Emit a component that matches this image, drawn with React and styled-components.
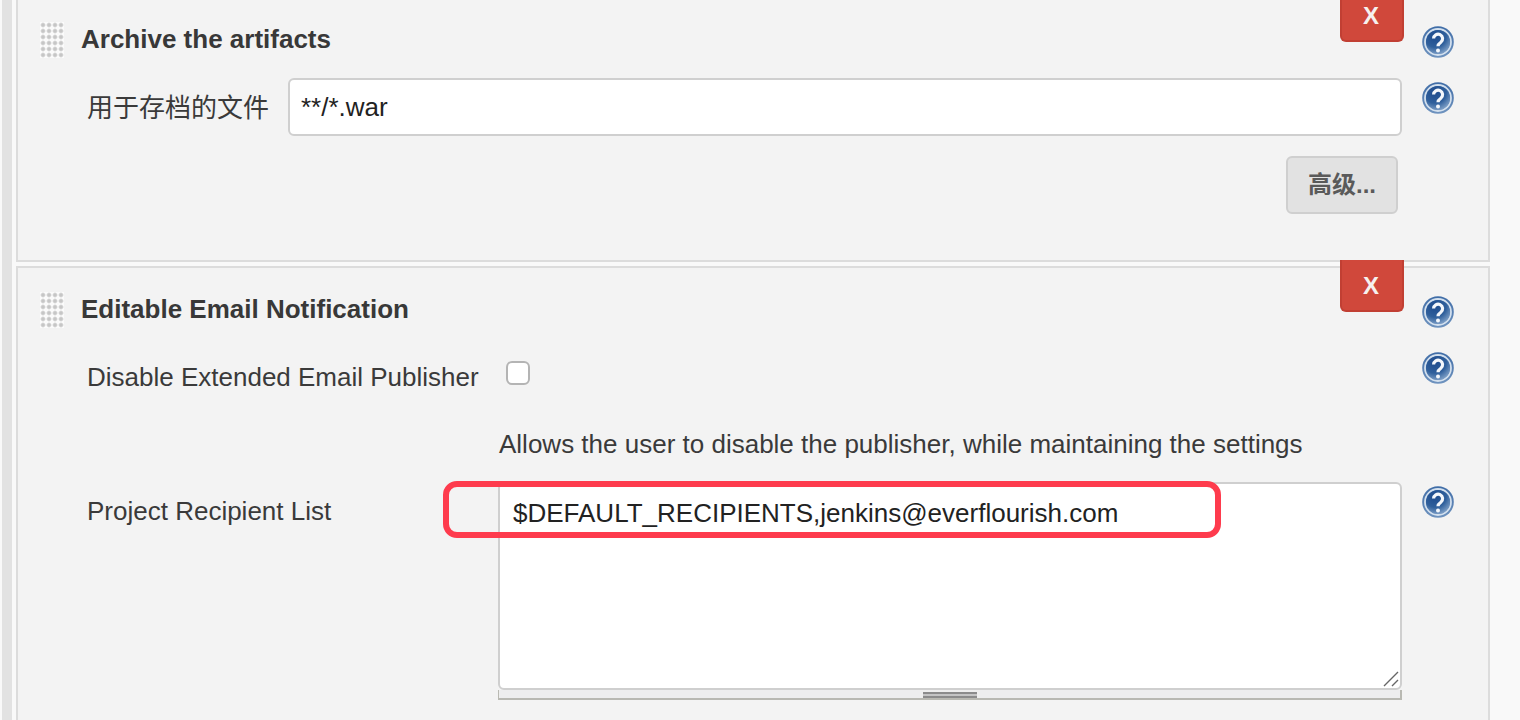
import React from "react"
import styled, { createGlobalStyle } from "styled-components"

const GlobalStyle = createGlobalStyle`
  html, body {
    margin: 0;
    height: 720px;
    overflow: hidden;
    background: #f9f9f9;
  }
  body {
    font-family: "Liberation Sans", "Noto Sans CJK SC", sans-serif;
    color: #333;
  }
`

const Page = styled.div`
  display: flex;
  height: 720px;
  overflow: hidden;
`

const Rail = styled.div`
  flex: 0 0 10px;
  margin: 0 4px 0 2px;
  background: #e2e2e2;
`

const Main = styled.div`
  flex: 0 0 1474px;
  display: flex;
  flex-direction: column;
  gap: 4px;
`

const Section = styled.section`
  position: relative;
  box-sizing: border-box;
  flex: 0 0 auto;
  background: #f3f3f3;
  border: 2px solid #dcdcdc;
  border-top-width: ${(p) => (p.$cut ? 0 : "2px")};
  padding: ${(p) => (p.$cut ? "22px 34px 46px 22px" : "24px 34px 40px 22px")};
`

const DeleteButton = styled.div`
  position: absolute;
  right: 84px;
  top: ${(p) => (p.$cut ? "-10px" : "-8px")};
  box-sizing: border-box;
  width: 64px;
  height: 52px;
  padding: 1px 2px 0 0;
  display: flex;
  align-items: center;
  justify-content: center;
  background: #d0483b;
  border: 2px solid #c13f33;
  border-top: 0;
  border-radius: 0 0 6px 6px;
  color: #f6f1ef;
  font-size: 24px;
  font-weight: 700;
`

const Header = styled.div`
  display: flex;
  align-items: flex-start;
  height: 36px;
`

const Grip = styled.div`
  flex: 0 0 24px;
  height: 36px;
  margin-right: 17px;
  background-color: #fbfbfb;
  background-image: radial-gradient(circle, #c6c6c6 1.3px, #fbfbfb 2.9px);
  background-size: 6px 6px;
`

const Title = styled.h3`
  flex: 1;
  margin: 0;
  font-size: 26px;
  line-height: 34px;
  font-weight: 700;
  color: #383838;
`

const Row = styled.div`
  position: relative;
  display: flex;
  align-items: flex-start;
  margin-top: ${(p) => p.$top || 20}px;
  min-height: ${(p) => p.$min || 0}px;
`

const Label = styled.label`
  box-sizing: border-box;
  flex: 0 0 ${(p) => p.$width}px;
  padding-left: 47px;
  padding-top: ${(p) => p.$pad || 0}px;
  font-size: 26px;
  line-height: 34px;
  color: #3a3a3a;
`

const Control = styled.div`
  flex: 1;
  min-width: 0;
`

const TextInput = styled.input`
  box-sizing: border-box;
  display: block;
  width: 100%;
  height: 58px;
  padding: 1px 11px 0;
  background: #fff;
  border: 2px solid #cfcfcf;
  border-radius: 6px;
  outline: 0;
  font: 26px "Liberation Sans", sans-serif;
  color: #222;
`

const Check = styled.input`
  appearance: none;
  display: block;
  box-sizing: border-box;
  width: 24px;
  height: 24px;
  margin: 13px 0 0 7px;
  background: #fff;
  border: 2px solid #b4b4b4;
  border-radius: 6px;
`

const Actions = styled.div`
  display: flex;
  justify-content: flex-end;
  margin: 20px 56px 0 0;
`

const Button = styled.button`
  box-sizing: border-box;
  width: 112px;
  height: 58px;
  padding: 0 0 6px;
  background: #e2e2e2;
  border: 2px solid #cfcfcf;
  border-radius: 6px;
  font: 700 24px "Liberation Sans", "Noto Sans CJK SC", sans-serif;
  color: #5a5a5a;
`

const Description = styled.div`
  margin: 21px 0 0 459px;
  font-size: 26px;
  line-height: 30px;
  color: #3a3a3a;
`

const AreaWrap = styled.div`
  position: relative;
  flex: 1;
  min-width: 0;
`

const Area = styled.textarea`
  box-sizing: border-box;
  display: block;
  width: 100%;
  height: 208px;
  padding: 14px 13px;
  background: #fff;
  border: 2px solid #cfcfcf;
  border-radius: 6px;
  outline: 0;
  resize: none;
  font: 26px/30px "Liberation Sans", sans-serif;
  color: #222;
`

const ResizeSvg = styled.svg`
  position: absolute;
  right: 3px;
  bottom: 13px;
  width: 16px;
  height: 16px;
`

const Grippie = styled.div`
  box-sizing: border-box;
  height: 10px;
  display: flex;
  justify-content: center;
  background: #eeeeee;
  border: 2px solid #b9b9b2;
  border-top: 0;
  border-left-width: 1px;

  &::before {
    content: "";
    width: 54px;
    height: 6px;
    margin-top: 2px;
    background: linear-gradient(#8b8b8b 0 2px, #c4c4c4 2px 4px, #8b8b8b 4px 6px);
  }
`

const Highlight = styled.div`
  position: absolute;
  left: 403px;
  top: -1px;
  box-sizing: border-box;
  width: 778px;
  height: 57px;
  border: 6px solid #fe3b4d;
  border-radius: 14px;
  pointer-events: none;
`

const HelpSvg = styled.svg`
  flex: 0 0 32px;
  display: block;
  width: 32px;
  height: 32px;
  margin: 4px 0 0 20px;
  filter: blur(0.35px);
`

const HelpIcon = () => (
  <HelpSvg viewBox="0 0 32 32">
    <defs>
      <radialGradient id="helpFill" cx="38%" cy="25%" r="85%">
        <stop offset="0%" stopColor="#1d4a8c" />
        <stop offset="55%" stopColor="#30609c" />
        <stop offset="100%" stopColor="#8fadd0" />
      </radialGradient>
      <linearGradient id="helpEdge" x1="0" y1="0" x2="0" y2="1">
        <stop offset="0%" stopColor="#3f6ca6" />
        <stop offset="100%" stopColor="#6f93bf" />
      </linearGradient>
    </defs>
    <circle cx="16" cy="16" r="15.8" fill="url(#helpEdge)" />
    <circle cx="16" cy="16" r="13" fill="none" stroke="#d3e0ee" strokeWidth="1.8" />
    <circle cx="16" cy="16" r="12" fill="url(#helpFill)" />
    <path
      d="M11.6 12.6a4.5 4.5 0 1 1 7.2 3.6c-1.7 1.2-2.8 2-2.8 4"
      fill="none"
      stroke="#f4f7fb"
      strokeWidth="3.2"
    />
    <circle cx="16" cy="24.4" r="2" fill="#f4f7fb" />
  </HelpSvg>
)

const App = () => {
  return (
    <Page>
      <GlobalStyle />
      <Rail />
      <Main>
        <Section $cut>
          <DeleteButton $cut>X</DeleteButton>
          <Header>
            <Grip />
            <Title>Archive the artifacts</Title>
            <HelpIcon />
          </Header>
          <Row>
            <Label $width={248} $pad={13}>用于存档的文件</Label>
            <Control>
              <TextInput readOnly value="**/*.war" />
            </Control>
            <HelpIcon />
          </Row>
          <Actions>
            <Button>高级...</Button>
          </Actions>
        </Section>

        <Section>
          <DeleteButton>X</DeleteButton>
          <Header>
            <Grip />
            <Title>Editable Email Notification</Title>
            <HelpIcon />
          </Header>
          <Row $min={60}>
            <Label $width={459} $pad={12}>Disable Extended Email Publisher</Label>
            <Control>
              <Check type="checkbox" />
            </Control>
            <HelpIcon />
          </Row>
          <Description>Allows the user to disable the publisher, while maintaining the settings</Description>
          <Row $top={23}>
            <Label $width={458} $pad={12}>Project Recipient List</Label>
            <AreaWrap>
              <Area readOnly value="$DEFAULT_RECIPIENTS,jenkins@everflourish.com" />
              <ResizeSvg viewBox="0 0 16 16">
                <path d="M1 15 15 1M9 15l6-6" stroke="#666" strokeWidth="1.4" fill="none" />
              </ResizeSvg>
              <Grippie />
            </AreaWrap>
            <HelpIcon />
            <Highlight />
          </Row>
        </Section>
      </Main>
    </Page>
  )
}

export default App
